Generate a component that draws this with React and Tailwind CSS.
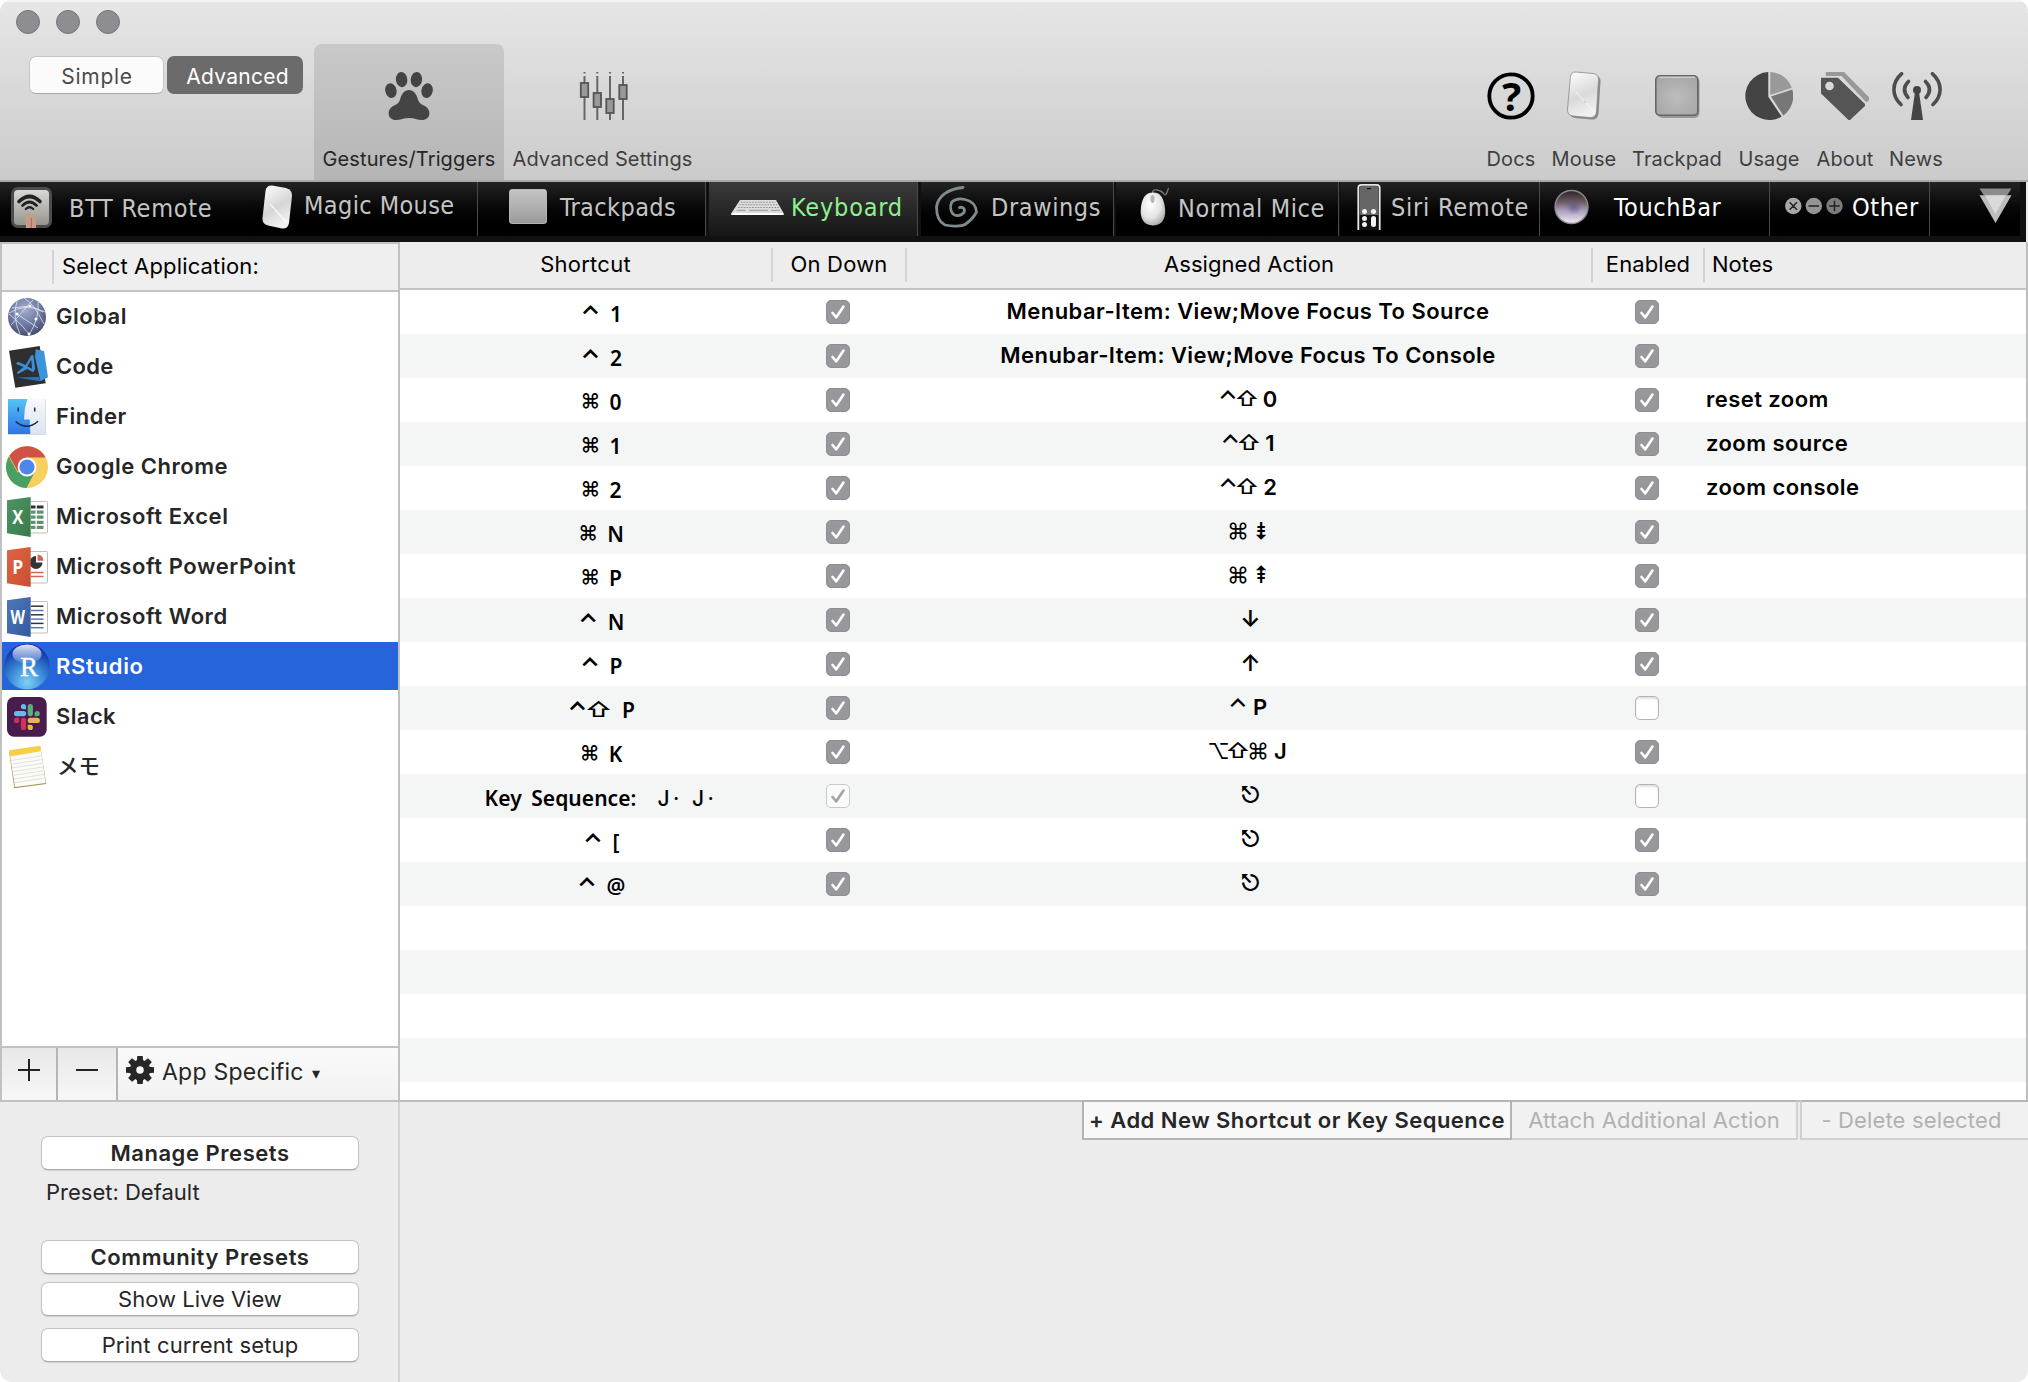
import React from "react";

const INTER = "font-['Inter',sans-serif]";

/* ---------- toolbar icons ---------- */

const PawIcon = () => (
  <svg width="48" height="48" viewBox="0 0 48 48" fill="#444">
    <ellipse cx="16.6" cy="7.6" rx="5.7" ry="7.6" transform="rotate(-6 16.6 7.6)" />
    <ellipse cx="31.4" cy="7.6" rx="5.7" ry="7.6" transform="rotate(6 31.4 7.6)" />
    <ellipse cx="5.9" cy="18.6" rx="5.6" ry="7.4" transform="rotate(-14 5.9 18.6)" />
    <ellipse cx="42.1" cy="18.6" rx="5.6" ry="7.4" transform="rotate(14 42.1 18.6)" />
    <path d="M24 18c4.6 0 7.4 4.2 8.6 8.4 1 3.800 2.600 5.400 5.800 6.800 4 1.800 6 4.600 6 8 0 4.400-3.200 6.800-7.400 6.800-4.400 0-8-2-13-2s-8.600 2-13 2c-4.200 0-7.400-2.400-7.400-6.800 0-3.400 2-6.200 6-8 3.200-1.400 4.800-3 5.800-6.800C16.600 22.200 19.400 18 24 18z" />
  </svg>
);

const SlidersIcon = () => (
  <svg width="50" height="48" viewBox="0 0 50 48" className="ml-[2px]">
    {[[5.500, 10.500], [18.300, 20.500], [31, 26.500], [44, 12.500]].map(([x, y]) => (
      <g key={x}>
        <path d={`M${x} 0v1.500M${x} 4v44`} stroke="#666" strokeWidth="2" />
        <rect x={x - 3.700} y={y + 0.500} width="7.400" height="14" fill="#999" stroke="#555" strokeWidth="1.800" />
      </g>
    ))}
  </svg>
);

const DocsIcon = () => (
  <svg width="48" height="48" viewBox="0 0 48 48" className="overflow-visible">
    <circle cx="24" cy="24" r="21.700" fill="none" stroke="#000" strokeWidth="3.800" />
    <text x="24.600" y="39" textAnchor="middle" fontSize="40" fontWeight="700" className="font-['Noto_Sans',sans-serif]">?</text>
  </svg>
);

const MouseIcon = () => (
  <svg width="38" height="50" viewBox="-0.5 0 37 50">
    <defs>
      <linearGradient id="mouseBody" x1="0" y1="0" x2="0.3" y2="1">
        <stop offset="0" stopColor="#fff" />
        <stop offset="0.6" stopColor="#d9d9d9" />
        <stop offset="1" stopColor="#f0f0f0" />
      </linearGradient>
    </defs>
    <path d="M11 3.500 L29 4.500 Q35 5.200 34.500 11 L32.500 42.500 Q32 48.800 25.500 48.500 L9 47 Q3 46 3.500 40 L6 8 Q6.500 3 11 3.500z" fill="#555" opacity="0.600" />
    <path d="M10 1 L27 2.500 Q32.800 3 32.500 9 L30.500 40.500 Q30 47 23.500 46.500 L7 45 Q1 44.300 1.500 38 L4.300 6.500 Q4.800 .6 10 1z" fill="url(#mouseBody)" stroke="#8a8a8a" strokeWidth="0.800" />
    <path d="M10 21 L29 42" stroke="#fff" strokeWidth="1" opacity="0.800" />
    <circle cx="19" cy="31" r="1.300" fill="#f5c8bd" />
  </svg>
);

const TrackpadIcon = () => (
  <svg width="48" height="48" viewBox="0 0 48 48">
    <defs>
      <radialGradient id="padFace" cx="0.5" cy="0.55" r="0.75">
        <stop offset="0" stopColor="#bdbdbd" />
        <stop offset="1" stopColor="#a2a2a2" />
      </radialGradient>
    </defs>
    <rect x="4.500" y="5" width="42" height="41" rx="5" fill="#666" opacity="0.550" />
    <rect x="2.800" y="3.800" width="42" height="39.500" rx="4" fill="url(#padFace)" stroke="#666" strokeWidth="1.600" />
    <path d="M6 5.200h36" stroke="#ddd" strokeWidth="1" />
  </svg>
);

const UsageIcon = () => (
  <svg width="48" height="48" viewBox="0 0 48 48">
    <path d="M23.300 0 A24 24 0 1 0 36.600 44.600 L23.300 24.800z" fill="#444" />
    <path d="M25.200 0 A24 24 0 0 1 46.800 15.800 L25.200 23z" fill="#999" />
    <path d="M47.300 17.500 A24 24 0 0 1 38.300 43.500 L26 24.600z" fill="#777" />
  </svg>
);

const AboutIcon = () => (
  <svg width="48" height="48" viewBox="0 0 48 48">
    <path d="M4.800 0H23L48 25.300V28l-2.600 2.400L20.500 4H4.800z" fill="#999" />
    <path fillRule="evenodd" d="M0 5.700h17L44 32v2L29 48h-1.500L0 21.500zM8.500 9.700a4.300 4.300 0 1 0 0 8.600a4.300 4.300 0 1 0 0-8.600z" fill="#555" />
  </svg>
);

const NewsIcon = () => (
  <svg width="50" height="48" viewBox="0 0 50 48" className="ml-[2px]">
    <g fill="none" stroke="#4d4d4d" strokeWidth="3.600" strokeLinecap="round">
      <path d="M16.500 9.500Q8.800 17 16 25.500M33.500 9.500Q41.200 17 34 25.500" />
      <path d="M9.500 1.800C-.5 10.500-.5 24 9 32.500M40.500 1.800C50.500 10.500 50.500 24 41 32.500" />
    </g>
    <circle cx="25" cy="18" r="4" fill="#444" />
    <path d="M23 20h4l4 28H19z" fill="#444" />
  </svg>
);

/* ---------- category tab icons ---------- */

const RemoteGlyph = () => (
  <svg width="41" height="54" viewBox="0 0 41 54" className="shrink-0">
    <defs>
      <linearGradient id="remoteFace" x1="0" y1="0" x2="0" y2="1">
        <stop offset="0" stopColor="#d8d8d4" />
        <stop offset="1" stopColor="#96968f" />
      </linearGradient>
    </defs>
    <rect x="0" y="5" width="41" height="41" rx="7" fill="#4d4d4d" />
    <rect x="3" y="8" width="35" height="35" rx="4" fill="url(#remoteFace)" />
    <g fill="none" stroke="#222" strokeLinecap="round">
      <path d="M8 19.500Q18.500 9.500 29 19.500" strokeWidth="3.600" />
      <path d="M11.500 23.500Q18.500 16.500 25.500 23.500" strokeWidth="2.800" />
      <path d="M14.800 27Q18.500 23.500 22.200 27" strokeWidth="2.200" />
    </g>
    <path d="M15 46V36l1.500-4.500q1.800-2 3.200.4L20.500 36l2-1.500q2 0 2.500 3V46z" fill="#c99a86" />
    <path d="M20.300 36v10" stroke="#94644f" strokeWidth="0.800" />
  </svg>
);

const MagicMouseGlyph = () => (
  <svg width="32" height="54" viewBox="0 0 32 54" className="shrink-0">
    <defs>
      <linearGradient id="magicBody" x1="0" y1="0" x2="0.4" y2="1">
        <stop offset="0" stopColor="#fff" />
        <stop offset="0.6" stopColor="#d5d5d5" />
        <stop offset="1" stopColor="#f0f0f0" />
      </linearGradient>
    </defs>
    <path d="M10 3.500L24 6Q30.500 8 30 14L27 41Q26 47 20 46.500L6 43.500Q0 42 .5 36L3.500 9Q4.500 3 10 3.500z" fill="url(#magicBody)" />
    <path d="M8 22L25 41" stroke="#fff" strokeWidth="1.200" opacity="0.800" />
  </svg>
);

const TrackpadGlyph = () => (
  <svg width="38" height="54" viewBox="0 0 38 54">
    <defs>
      <linearGradient id="tabPad" x1="0" y1="0" x2="0" y2="1">
        <stop offset="0" stopColor="#c4c4c4" />
        <stop offset="0.7" stopColor="#a8a8a8" />
        <stop offset="1" stopColor="#989898" />
      </linearGradient>
    </defs>
    <rect x="0.500" y="7.500" width="37" height="34" rx="2.500" fill="url(#tabPad)" stroke="#ccc" strokeWidth="0.800" />
  </svg>
);

const KeyboardGlyph = () => (
  <svg width="53" height="54" viewBox="0 0 53 54">
    <path d="M9 18h36l7.500 13v2H.5v-2z" fill="#dcdcdc" />
    <path d="M.5 31h52v2H.5z" fill="#fff" />
    <path d="M10 20.200h34.500M8.500 22.800h38M7 25.500h41" stroke="#8f8f8f" strokeWidth="1.100" strokeDasharray="1.600 1.200" />
    <path d="M5.500 28.300h9M18 28.300h19M40 28.300h9" stroke="#999" strokeWidth="1" />
  </svg>
);

const SpiralGlyph = () => (
  <svg width="45" height="54" viewBox="0 0 45 54" fill="none" stroke="#7f8c8d" strokeWidth="2.800" strokeLinecap="round" strokeLinejoin="round">
    <path d="M29 5.500C14 7 4 14 2.500 25C2.500 33 5 40 11 43C18 44.500 27 44.500 31 42.500C36 39 40 35 42.500 30C42 24 38 19 31 17.500C26 16.300 21 17 17.800 20C16 24 16.300 29 19 32C22 34.500 27 34 30 30.500C31.500 27 29 24.500 25.500 25.500" />
  </svg>
);

const MiceGlyph = () => (
  <svg width="32" height="54" viewBox="0 0 32 54">
    <defs>
      <radialGradient id="miceBody" cx="0.4" cy="0.35" r="0.7">
        <stop offset="0" stopColor="#fff" />
        <stop offset="0.6" stopColor="#e4e4e4" />
        <stop offset="1" stopColor="#a8a8a8" />
      </radialGradient>
    </defs>
    <path d="M13.500 12Q13 7 18 8T25 12T29.500 6" fill="none" stroke="#777" strokeWidth="1.300" />
    <path d="M14 10.500C21 10.500 24 15 25.500 23C28 35 24 43.500 14 43.500S.5 35 2 25C3.500 15 7 10.500 14 10.500z" fill="url(#miceBody)" />
    <ellipse cx="13.500" cy="17" rx="2" ry="4" fill="#b5b5b5" />
  </svg>
);

const SiriGlyph = () => (
  <svg width="24" height="54" viewBox="0 0 24 54">
    <path d="M1.300 48V6Q1.300 2.800 4.500 2.800H19.500Q22.700 2.800 22.700 6V48" fill="#111" stroke="#e8e8e8" strokeWidth="1.800" />
    <path d="M2.500 5Q3 4 4.500 4h15q1.500 0 2 1V33h-19z" fill="#666" />
    <rect x="10" y="6" width="4" height="1.200" fill="#111" />
    <g fill="#f2f2f2">
      <circle cx="7.500" cy="29.500" r="2.500" />
      <circle cx="16.500" cy="29.500" r="2.500" />
      <circle cx="7.500" cy="36.500" r="2.500" />
      <circle cx="7.500" cy="42.500" r="2.500" />
      <rect x="14" y="34" width="5" height="11" rx="2.500" />
    </g>
  </svg>
);

const TouchGlyph = () => (
  <svg width="36" height="54" viewBox="0 0 36 54">
    <defs>
      <linearGradient id="touchOrb" x1="0" y1="0" x2="0" y2="1">
        <stop offset="0" stopColor="#2c2326" />
        <stop offset="0.35" stopColor="#6b5c66" />
        <stop offset="0.6" stopColor="#a89cb8" />
        <stop offset="1" stopColor="#f0ecf6" />
      </linearGradient>
      <radialGradient id="touchCore">
        <stop offset="0" stopColor="#5a4b8a" />
        <stop offset="1" stopColor="#5a4b8a" stopOpacity="0" />
      </radialGradient>
    </defs>
    <circle cx="17.500" cy="25" r="16.500" fill="url(#touchOrb)" stroke="#8d8a8f" strokeWidth="1.400" />
    <circle cx="20" cy="25" r="8" fill="url(#touchCore)" opacity="0.600" />
  </svg>
);

const OtherGlyph = () => (
  <svg width="58" height="54" viewBox="0 0 58 54">
    <circle cx="8.300" cy="24" r="8.200" fill="#a8a8a8" />
    <circle cx="28.800" cy="24" r="8.200" fill="#949494" />
    <circle cx="49.500" cy="24" r="8.200" fill="#7c7c7c" />
    <path d="M4.600 20.300l7.400 7.400M12 20.300l-7.400 7.400M23.500 24h10.600M44.200 24h10.600M49.500 18.700v10.600" stroke="#222" strokeWidth="1.500" />
  </svg>
);

const DropGlyph = () => (
  <svg width="34" height="54" viewBox="0 0 34 54">
    <path d="M.5 6.500h32l-4.500 7H5z" fill="#8c8c8c" />
    <path d="M.5 13.300h32L16.500 41z" fill="#bdbdbd" />
    <path d="M6 13.300h21L16.500 32z" fill="#dadada" />
  </svg>
);

/* ---------- application icons: 50px rows ---------- */

const AppIcon = ({ children }) => (
  <svg width="55" height="50" viewBox="2 0 55 50" className="shrink-0">{children}</svg>
);

const GlobalApp = () => (
  <AppIcon>
    <defs>
      <radialGradient id="globe" cx="0.45" cy="0.3" r="0.75">
        <stop offset="0" stopColor="#a3adcd" />
        <stop offset="0.6" stopColor="#69739c" />
        <stop offset="1" stopColor="#3e4468" />
      </radialGradient>
    </defs>
    <circle cx="27" cy="25" r="19" fill="url(#globe)" />
    <g fill="none" stroke="#e6e9f5" strokeWidth="0.900" opacity="0.850">
      <path d="M9 21Q26 10 45 20M17 9Q12 25 20 42M24 6Q34 12 44 32M33 8Q22 20 11 33M38 10Q40 25 29 43M9 22Q20 30 30 43M17 22L38 36M12 16L30 14L43 20" />
    </g>
    <g fill="#fff"><circle cx="17" cy="22" r="1.500" /><circle cx="36" cy="27" r="1.500" /><circle cx="29" cy="42" r="1.500" /><circle cx="30" cy="14" r="1.200" /></g>
  </AppIcon>
);

const CodeApp = () => (
  <AppIcon>
    <path d="M9 8.700L39.700 4L45.700 41.300L15.300 45.700z" fill="#2f2f31" />
    <path d="M35.700 7.300L44 9L48 35.300L40.500 39.300L35 15z" fill="#3d94d8" />
    <path d="M16.500 35.500L39 35L40.500 39.300z" fill="#2673bd" />
    <path d="M31 13.500l2.300-.8 1.900 14.300-2 3.300-6-3.300L18 32l-1.500-1.300 7-5.700-7.300-3 1.300-2.300 8.300 3.300zM31.300 17.500l-4 7 4.800 2.300z" fill="#3c8fd6" fillRule="evenodd" />
  </AppIcon>
);

const FinderApp = () => (
  <AppIcon>
    <defs>
      <linearGradient id="finderLeft" x1="0" y1="0" x2="0" y2="1">
        <stop offset="0" stopColor="#52c4f6" />
        <stop offset="1" stopColor="#2f74ea" />
      </linearGradient>
      <linearGradient id="finderRight" x1="0" y1="0" x2="0" y2="1">
        <stop offset="0" stopColor="#f7f8fa" />
        <stop offset="1" stopColor="#dbe4f0" />
      </linearGradient>
    </defs>
    <rect x="8" y="7" width="38" height="35.800" rx="1" fill="#c9ced6" />
    <path d="M8 7h22.500v35H8z" fill="url(#finderLeft)" />
    <path d="M27.300 7H45.500V42H30.500Q29.800 34 29.700 27.500H24Q24 17 27.300 7z" fill="url(#finderRight)" />
    <path d="M18.300 15.500v4M34.700 15.500v4" stroke="#1a2b42" strokeWidth="1.500" />
    <path d="M15.700 29.700Q27 39 38 29.200" fill="none" stroke="#1a2b42" strokeWidth="1.500" />
  </AppIcon>
);

const ChromeApp = () => (
  <AppIcon>
    <circle cx="27" cy="25" r="21" fill="#f8d05f" />
    <path d="M27 25L17.500 30.500L8.800 14.500A21 21 0 0 0 26.500 46L35 29.500z" fill="#4a9f63" />
    <path d="M27 25L17.800 29.500L9.300 14A21 21 0 0 1 45.600 15.500H27z" fill="#d05247" />
    <circle cx="27" cy="25" r="9.400" fill="#fff" />
    <circle cx="27" cy="25" r="7.600" fill="#4f86ec" />
  </AppIcon>
);

const OfficeBase = ({ fill, fillDark, id, letter, children }) => (
  <AppIcon>
    <defs>
      <linearGradient id={id} x1="0" y1="0" x2="1" y2="1">
        <stop offset="0" stopColor={fill} />
        <stop offset="1" stopColor={fillDark} />
      </linearGradient>
    </defs>
    <rect x="28" y="9.500" width="19.500" height="31.500" rx="0.800" fill="#fff" stroke="#b5b5b5" strokeWidth="0.900" />
    {children}
    <path d="M7 8.300L30.700 5V45L7 41.300z" fill={`url(#${id})`} />
    <text x="17.700" y="32.300" textAnchor="middle" fontSize="20" fontWeight="700" fill="#fff" className="font-['Open_Sans',sans-serif]" textLength={letter === "W" ? 14.500 : 11} lengthAdjust="spacingAndGlyphs">{letter}</text>
  </AppIcon>
);

const ExcelApp = () => (
  <OfficeBase id="xl" fill="#4f9463" fillDark="#397a4d" letter="X">
    {[13.500, 18.600, 23.700, 28.800, 33.900].map((y, i) => (
      <path key={y} d={`M31 ${y + 1.500}h4.500M36.800 ${y + 1.500}h6.700`} stroke={i === 0 ? "#333" : "#5f9273"} strokeWidth="3.200" />
    ))}
  </OfficeBase>
);

const PowerPointApp = () => (
  <OfficeBase id="pp" fill="#e0643f" fillDark="#c94f33" letter="P">
    <path d="M36 14v6.500h6.500A6.500 6.500 0 1 1 36 14z" fill="#333" />
    <path d="M37.500 12.500v6.300h6Q43 13 37.500 12.500z" fill="#d0694f" />
    <path d="M31 30.500h12.500M31 34.500h12.500" stroke="#d0694f" strokeWidth="1.300" />
  </OfficeBase>
);

const WordApp = () => (
  <OfficeBase id="wd" fill="#4f78b8" fillDark="#34599f" letter="W">
    {[14.200, 18.500, 22.800, 27.100, 31.400, 35.700].map((y, i) => (
      <path key={y} d={`M31 ${y}h12.500`} stroke={i % 2 ? "#5577b5" : "#333"} strokeWidth="1.500" />
    ))}
  </OfficeBase>
);

const RStudioApp = () => (
  <AppIcon>
    <defs>
      <radialGradient id="rball" cx="0.5" cy="0.85" r="0.8">
        <stop offset="0" stopColor="#7fd0f6" />
        <stop offset="0.45" stopColor="#3d8fd8" />
        <stop offset="1" stopColor="#0d2fa8" />
      </radialGradient>
      <linearGradient id="rshine" x1="0" y1="0" x2="0" y2="1">
        <stop offset="0" stopColor="#fff" stopOpacity="0.900" />
        <stop offset="1" stopColor="#fff" stopOpacity="0.100" />
      </linearGradient>
    </defs>
    <circle cx="27" cy="24.600" r="22.800" fill="url(#rball)" />
    <ellipse cx="27" cy="12" rx="14.500" ry="9.500" fill="url(#rshine)" />
    <text x="29" y="34" textAnchor="middle" fontSize="27" fill="#fff" stroke="#fff" strokeWidth="0.400" className="font-['Liberation_Serif',serif]">R</text>
  </AppIcon>
);

const SlackApp = () => (
  <AppIcon>
    <rect x="7" y="5" width="39.700" height="39.700" rx="7" fill="#491c4e" />
    <g fill="#63bfe8"><rect x="14" y="19" width="12.200" height="5.200" rx="2.600" /><path d="M23.500 12a2.600 2.600 0 0 1 2.600 2.600v2.600h-2.600a2.600 2.600 0 0 1 0-5.200z" /></g>
    <g fill="#58b07f"><rect x="27.700" y="12" width="5.200" height="12.200" rx="2.600" /><path d="M39.800 21.600a2.600 2.600 0 0 1-2.600 2.600h-2.600v-2.600a2.600 2.600 0 0 1 5.200 0z" /></g>
    <g fill="#e5b548"><rect x="27.700" y="25.800" width="12.200" height="5.200" rx="2.600" /><path d="M30.300 38a2.600 2.600 0 0 1-2.600-2.600v-2.600h2.600a2.600 2.600 0 0 1 0 5.200z" /></g>
    <g fill="#d2315c"><rect x="20.900" y="25.800" width="5.200" height="12.200" rx="2.600" /><path d="M14 28.400a2.600 2.600 0 0 1 2.600-2.600h2.600v2.600a2.600 2.600 0 0 1-5.200 0z" /></g>
  </AppIcon>
);

const MemoApp = () => (
  <AppIcon>
    <path d="M9 9.500L40.300 4.500L46.300 42L14.300 46.300z" fill="#a8965a" />
    <path d="M9.300 9L40.300 4.300L45.700 41L15 45z" fill="#fbfbf8" />
    <path d="M9 8.300L40.300 3.800L41 9.300L10 14.500z" fill="#f7cf45" />
    <g stroke="#dedede" strokeWidth="0.900">
      {[0, 1, 2, 3, 4, 5, 6].map((i) => (
        <path key={i} d={`M${11 + i * 0.600} ${18.500 + i * 3.700}l30.500-4.600`} />
      ))}
    </g>
  </AppIcon>
);

/* ---------- data ---------- */

const APPS = [
  ["Global", GlobalApp, "tracking-[0.5px]"],
  ["Code", CodeApp, "tracking-[0.3px]"],
  ["Finder", FinderApp, "tracking-[0.5px]"],
  ["Google Chrome", ChromeApp, "tracking-[0.5px]"],
  ["Microsoft Excel", ExcelApp, "tracking-[0.57px]"],
  ["Microsoft PowerPoint", PowerPointApp, "tracking-[0.57px]"],
  ["Microsoft Word", WordApp, "tracking-[0.57px]"],
  ["RStudio", RStudioApp, "tracking-[0.7px]"],
  ["Slack", SlackApp, "tracking-[0.4px]"],
  ["メモ", MemoApp, ""],
];

const ROWS = [
  { mods: "⌃", key: "1", action: "Menubar-Item: View;Move Focus To Source", on: true },
  { mods: "⌃", key: "2", action: "Menubar-Item: View;Move Focus To Console", on: true },
  { mods: "⌘", key: "0", amods: "⌃⇧", akey: "0", on: true, note: "reset zoom" },
  { mods: "⌘", key: "1", amods: "⌃⇧", akey: "1", on: true, note: "zoom source" },
  { mods: "⌘", key: "2", amods: "⌃⇧", akey: "2", on: true, note: "zoom console" },
  { mods: "⌘", key: "N", amods: "⌘", asym: "⇟", on: true },
  { mods: "⌘", key: "P", amods: "⌘", asym: "⇞", on: true },
  { mods: "⌃", key: "N", asym: "↓", on: true },
  { mods: "⌃", key: "P", asym: "↑", on: true },
  { mods: "⌃⇧", key: "P", amods: "⌃", akey: "P", on: false },
  { mods: "⌘", key: "K", amods: "⌥⇧⌘", akey: "J", on: true },
  { seq: "J· J·", asym: "⎋", on: false },
  { mods: "⌃", key: "[", asym: "⎋", on: true },
  { mods: "⌃", key: "@", asym: "⎋", on: true },
  {}, {}, {}, {},
];

const TOOLS = [
  ["Docs", DocsIcon, "w-[62px]"],
  ["Mouse", MouseIcon, "w-[84px]"],
  ["Trackpad", TrackpadIcon, "w-[102px]"],
  ["Usage", UsageIcon, "w-[82px]"],
  ["About", AboutIcon, "w-[70px]"],
  ["News", NewsIcon, "w-[72px]"],
];

/* ---------- pieces ---------- */

const ToolItem = ({ label, Icon, className, labelClass = "text-[#3f3f3f]" }) => (
  <div className={`mt-[44px] flex h-[136px] flex-col items-center pt-[28px] ${className}`}>
    <div className="flex h-[48px] items-center"><Icon /></div>
    <span className={`mt-[25px] text-[20px] leading-7 tracking-[0.13px] whitespace-nowrap ${labelClass}`}>{label}</span>
  </div>
);

const Tab = ({ className, Icon, label, textClass }) => (
  <div className={`flex h-[54px] shrink-0 items-center border-r border-[#4a4a4a] ${className}`}>
    <Icon />
    <span className={`whitespace-nowrap ${textClass}`}>{label}</span>
  </div>
);

const Tick = ({ color }) => (
  <svg width="22" height="22" viewBox="0 0 22 22" className="shrink-0" fill="none" stroke={color} strokeWidth="2.600" strokeLinecap="round" strokeLinejoin="round">
    <path d="M5.500 12L9.300 16.300L16.500 5.500" />
  </svg>
);

const Check = ({ checked, dim }) => {
  if (dim)
    return (
      <span className="flex size-6 items-center justify-center rounded-[5px] border border-[#c9c9c9] bg-[#fafafa]">
        <Tick color="#a3a3a3" />
      </span>
    );
  if (!checked)
    return <span className="block size-6 rounded-[5px] border border-[#b3b3b3] bg-white shadow-[inset_0_2px_2px_#e2e2e2]" />;
  return (
    <span className="flex size-6 items-center justify-center rounded-[5px] border border-[#8e8d92] bg-[#98979c]">
      <Tick color="#fff" />
    </span>
  );
};

const SHORTCUT_GLYPH = {
  "⌃": "w-[17px] pt-[6px] text-[25px] font-semibold",
  "⇧": "w-[25px] pt-[3px] text-[21px] font-medium scale-x-[1.25]",
  "⌘": "w-[16px] pt-[2px] text-[20px] font-medium",
};

const ACTION_GLYPH = {
  "⌃": "w-[18px] pt-[2px] text-[25px] font-medium",
  "⇧": "w-[20px] text-[21px] font-medium scale-x-[1.12]",
  "⌘": "w-[20px] text-[22px]",
  "⌥": "w-[19px] text-[22px]",
  "⇟": "w-[14px] text-[23px] font-medium",
  "⇞": "w-[14px] text-[23px] font-medium",
  "↓": "w-[18px] text-[23px] font-semibold",
  "↑": "w-[18px] text-[23px] font-semibold",
  "⎋": "w-[18px] text-[23px] font-medium",
};

const Glyphs = ({ text, styles }) =>
  [...text].map((g) => (
    <span key={g} className={`flex h-6 items-center justify-center ${styles[g]}`}>{g}</span>
  ));

const Shortcut = ({ row }) => {
  if (row.seq)
    return (
      <div className="flex items-baseline gap-[21px] pt-[4px] pl-[29px] text-[21px] whitespace-nowrap">
        <span className="font-['Noto_Sans',sans-serif] font-semibold tracking-[0.05px] [word-spacing:4px]">Key Sequence:</span>
        <span className="font-medium tracking-[3.5px]">{row.seq}</span>
      </div>
    );
  if (!row.mods) return null;
  return (
    <div className="flex items-center pl-[31px]">
      <Glyphs text={row.mods} styles={SHORTCUT_GLYPH} />
      <span className="pt-[4px] pl-[11px] font-['Noto_Sans',sans-serif] text-[21px] font-semibold">{row.key}</span>
    </div>
  );
};

const Action = ({ row }) => {
  if (row.action) return <span className="font-semibold tracking-[0.45px] whitespace-nowrap">{row.action}</span>;
  return (
    <div className={`flex items-center ${row.amods ? "" : "pl-[5px]"}`}>
      {row.amods && <Glyphs text={row.amods} styles={ACTION_GLYPH} />}
      {row.amods && <span className="w-[6px]" />}
      {row.akey && <span className="font-semibold">{row.akey}</span>}
      {row.asym && <Glyphs text={row.asym} styles={ACTION_GLYPH} />}
    </div>
  );
};

const COLS = "grid grid-cols-[373px_134px_686px_112px_1fr]";

const PushButton = ({ children, className = "" }) => (
  <button className={`flex h-[34px] w-[318px] items-center justify-center rounded-[7px] border border-[#c4c4c4] border-b-[#adadad] bg-white shadow-[0_1px_1px_rgba(0,0,0,0.12)] ${className}`}>
    {children}
  </button>
);

/* ---------- page ---------- */

export default function App() {
  return (
    <div className={`flex h-[1382px] w-[2028px] flex-col overflow-hidden rounded-[12px] bg-[#ececec] text-[22px] leading-7 text-[#262626] ${INTER}`}>
      {/* title bar and toolbar */}
      <header className="flex h-[182px] shrink-0 border-t-2 border-b-2 border-t-[#f4f4f4] border-b-[#a9a9a9] bg-linear-to-b from-[#e6e6e6] to-[#cbcbcb]">
        <div className="-mt-[2px] w-[314px] shrink-0">
          <div className="flex gap-[16px] pt-[10px] pl-[16px]">
            {[0, 1, 2].map((i) => (
              <span key={i} className="size-6 rounded-full border border-[#77767b] bg-[#8e8d92]" />
            ))}
          </div>
          <div className="mt-[22px] flex gap-[3px] pl-[29px] text-[21px]">
            <button className="h-[38px] w-[135px] rounded-[7px] border border-[#c6c6c6] border-b-[#aaa] bg-[#fbfbfb] pt-[3px] pl-px tracking-[0.7px] text-[#4a4a4a]">Simple</button>
            <button className="h-[38px] w-[136px] rounded-[7px] bg-[#6b6b6b] pt-[3px] pl-[5px] tracking-[0.26px] text-white">Advanced</button>
          </div>
        </div>
        <div className="-mt-[2px] flex grow">
          <ToolItem label="Gestures/Triggers" Icon={PawIcon} labelClass="text-[#262626]" className="w-[190px] rounded-t-[8px] bg-linear-to-b from-[#c9c9c9] to-[#b5b5b5]" />
          <ToolItem label="Advanced Settings" Icon={SlidersIcon} className="w-[197px]" />
          <div className="grow" />
          {TOOLS.map(([label, Icon, w]) => (
            <ToolItem key={label} label={label} Icon={Icon} className={w} />
          ))}
          <div className="w-[76px]" />
        </div>
      </header>

      {/* category tabs */}
      <nav className="mr-[2px] flex h-[60px] shrink-0 bg-[#111] font-['DejaVu_Sans_Condensed','DejaVu_Sans',sans-serif] text-[25px] text-[#c4c4c4]">
        <div className="flex h-[54px] w-[478px] shrink-0 items-center border-r border-[#4a4a4a] bg-linear-to-b from-[#232323] to-black pl-[11px]">
          <RemoteGlyph />
          <span className="w-[210px] shrink-0 pl-[17px] tracking-[0.7px] whitespace-nowrap">BTT Remote</span>
          <MagicMouseGlyph />
          <span className="pb-[6px] pl-[10px] tracking-[0.4px] whitespace-nowrap">Magic Mouse</span>
        </div>
        <Tab className="w-[228px] bg-linear-to-b from-[#232323] to-black pl-[31px]" Icon={TrackpadGlyph} label="Trackpads" textClass="pl-[13px] pb-[3px] tracking-[0.4px]" />
        <Tab className="ml-[3px] w-[209px] bg-linear-to-b from-[#3b3b3b] to-[#161616] pl-[22px]" Icon={KeyboardGlyph} label="Keyboard" textClass="pl-[7px] pb-[3px] tracking-[0.8px] text-[#8ff08f]" />
        <Tab className="ml-[3px] w-[193px] bg-linear-to-b from-[#232323] to-black pl-[13px]" Icon={SpiralGlyph} label="Drawings" textClass="pl-[12px] pb-[3px] tracking-[0.6px]" />
        <Tab className="ml-[2px] w-[223px] bg-linear-to-b from-[#232323] to-black pl-[23px]" Icon={MiceGlyph} label="Normal Mice" textClass="pl-[7px] tracking-[0.6px]" />
        <Tab className="ml-px w-[200px] bg-linear-to-b from-[#232323] to-black pl-[17px]" Icon={SiriGlyph} label="Siri Remote" textClass="pl-[10px] pb-[3px] tracking-[0.75px]" />
        <Tab className="w-[230px] bg-linear-to-b from-[#232323] to-black pl-[14px]" Icon={TouchGlyph} label="TouchBar" textClass="pl-[24px] pb-[3px] tracking-[0.6px] text-white" />
        <Tab className="w-[160px] bg-linear-to-b from-[#232323] to-black pl-[15px]" Icon={OtherGlyph} label="Other" textClass="pl-[9px] pb-[3px] tracking-[0.6px] text-white" />
        <div className="h-[54px] w-[90px] bg-linear-to-b from-[#232323] to-black pl-[49px]"><DropGlyph /></div>
      </nav>

      <div className="flex grow">
        {/* sidebar */}
        <aside className="flex w-[400px] shrink-0 flex-col border-r-2 border-[#d2d2d2]">
          <div className="-mr-[2px] flex h-[860px] flex-col border-2 border-[#c1c1c1]">
            <div className="flex h-[48px] shrink-0 border-b-2 border-[#c4c4c4] bg-[#efefef] text-black">
              <div className="my-[6px] w-[52px] border-r-2 border-[#d4d4d4]" />
              <span className="self-center pb-[2px] pl-[8px] tracking-[0.15px]">Select Application:</span>
            </div>
            <ul className="grow bg-white">
              {APPS.map(([name, Icon, tracking]) => (
                <li key={name} className="h-[50px]">
                  <div className={`flex h-[48px] items-start ${name === "RStudio" ? "bg-[#2564da] text-white" : ""}`}>
                    <Icon />
                    <span className={`-ml-px ${name === "メモ" ? "pl-px font-['Noto_Sans_CJK_JP',sans-serif] text-[21.5px] leading-[45px] font-medium" : "leading-[48px] font-semibold"} ${tracking}`}>{name}</span>
                  </div>
                </li>
              ))}
            </ul>
            <div className="flex h-[54px] shrink-0 border-t-2 border-[#c1c1c1] bg-linear-to-b from-[#fafafa] to-[#f2f2f2]">
              <div className="flex w-[56px] justify-center border-r-2 border-[#b5b5b5] bg-linear-to-b from-[#e8e8e8] to-[#f7f7f7] pt-[11px]">
                <svg width="22" height="22" viewBox="0 0 22 22" stroke="#222" strokeWidth="2"><path d="M11 0v22M0 11h22" /></svg>
              </div>
              <div className="flex w-[60px] justify-center border-r-2 border-[#b5b5b5] bg-linear-to-b from-[#e8e8e8] to-[#f7f7f7] pt-[11px]">
                <svg width="22" height="22" viewBox="0 0 22 22" stroke="#222" strokeWidth="2"><path d="M0 11h22" /></svg>
              </div>
              <div className="flex items-start pl-[8px]">
                <svg width="28" height="28" viewBox="-14 -14 28 28" className="mt-[8px]" fill="#262626">
                  {[0, 45, 90, 135, 180, 225, 270, 315].map((a) => (
                    <path key={a} d="M-2.700-14h5.400L3.300-8h-6.600z" transform={`rotate(${a})`} />
                  ))}
                  <circle r="7" fill="none" stroke="#262626" strokeWidth="6.500" />
                </svg>
                <span className="mt-[10px] pl-[8px] text-[23px] tracking-[0.25px] whitespace-nowrap">App Specific</span>
                <span className="mt-[11px] pl-[8px] text-[16px]">▾</span>
              </div>
            </div>
          </div>

          <div className="flex flex-col items-start pt-[34px] pl-[41px]">
            <PushButton className="font-semibold tracking-[0.55px]">Manage Presets</PushButton>
            <span className="mt-[8px] pl-[5px]">Preset: Default</span>
            <PushButton className="mt-[34px] font-semibold tracking-[0.6px]">Community Presets</PushButton>
            <PushButton className="mt-[8px]">Show Live View</PushButton>
            <PushButton className="mt-[12px] tracking-[0.15px]">Print current setup</PushButton>
          </div>
        </aside>

        {/* shortcut table */}
        <main className="flex grow flex-col">
          <div className="flex h-[860px] flex-col border-r-2 border-b-2 border-[#bdbdbd] bg-white text-black">
            <div className={`h-[48px] shrink-0 border-b-2 border-[#c4c4c4] bg-[#ededed] text-center ${COLS}`}>
              <span className="my-[6px] border-r-2 border-[#d4d4d4] pt-[2px] tracking-[0.25px]">Shortcut</span>
              <span className="my-[6px] border-r-2 border-[#d4d4d4] pt-[2px] tracking-[0.2px]">On Down</span>
              <span className="my-[6px] border-r-2 border-[#d4d4d4] pt-[2px] tracking-[0.05px]">Assigned Action</span>
              <span className="my-[6px] border-r-2 border-[#d4d4d4] pt-[2px] tracking-[0.1px]">Enabled</span>
              <span className="my-[6px] pt-[2px] pl-[7px] text-left">Notes</span>
            </div>
            {ROWS.map((row, i) => (
              <div key={i} className={`h-[44px] shrink-0 items-center ${COLS} ${i % 2 ? "bg-[#f4f5f5]" : "bg-white"}`}>
                <div className="flex justify-center"><Shortcut row={row} /></div>
                <div className="flex justify-center pr-[4px]">{row.on !== undefined && <Check checked dim={!!row.seq} />}</div>
                <div className="flex justify-center pr-[4px] pb-[2px]"><Action row={row} /></div>
                <div className="flex justify-center pr-[4px]">{row.on !== undefined && <Check checked={row.on} />}</div>
                <span className="pb-[2px] pl-px font-semibold tracking-[0.45px]">{row.note}</span>
              </div>
            ))}
          </div>
          <div className="-mt-[2px] flex h-[40px] justify-end">
            <button className="w-[430px] border-2 border-[#b4b4b4] bg-[#f8f8f8] text-[22px] font-semibold tracking-[0.47px] whitespace-nowrap">+ Add New Shortcut or Key Sequence</button>
            <button className="w-[286px] border-y-2 border-r-2 border-[#d0d0d0] border-t-[#b4b4b4] bg-[#f1f1f1] tracking-[0.1px] text-[#b1b1b1]">Attach Additional Action</button>
            <button className="ml-[2px] w-[228px] border-y-2 border-l-2 border-[#d0d0d0] border-t-[#b4b4b4] bg-[#f1f1f1] pr-[7px] tracking-[0.15px] text-[#b1b1b1]">- Delete selected</button>
          </div>
        </main>
      </div>
    </div>
  );
}
